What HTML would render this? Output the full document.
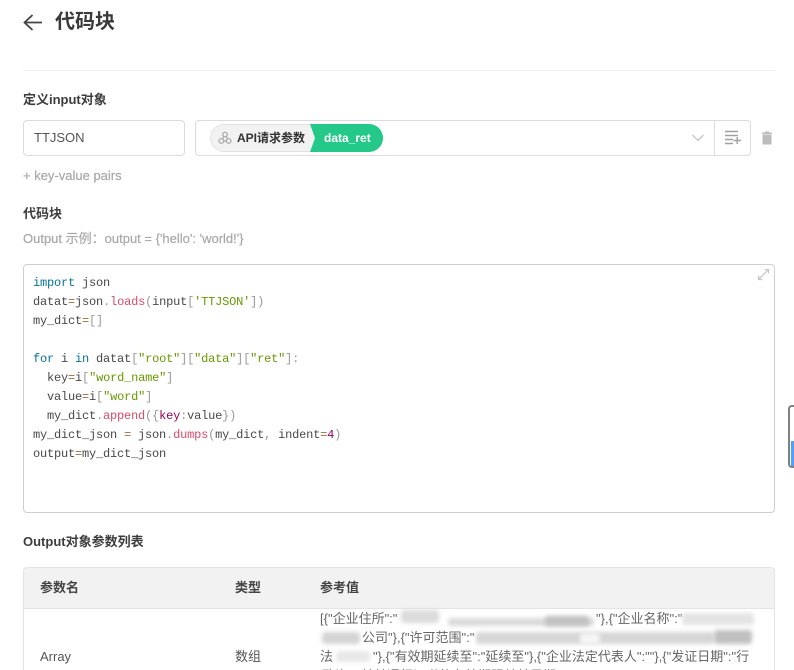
<!DOCTYPE html>
<html lang="zh">
<head>
<meta charset="utf-8">
<style>
html{margin:0;padding:0;background:#fff;width:794px;height:670px;overflow:hidden}
body{margin:0;padding:0;background:#fff;width:794px;height:670px;position:relative;overflow:hidden;font-family:"Liberation Sans","Noto Sans CJK SC",sans-serif;color:#333}
#w{position:absolute;left:0;top:0;width:794px;height:670px;overflow:hidden}
.a{position:absolute;white-space:nowrap}
.lb{font-size:13px;font-weight:700;line-height:18px;color:#3c3c3c}
.gr{color:#a8a8a8}
.box{position:absolute;box-sizing:border-box;border:1px solid #dcdcdc;border-radius:4px;background:#fff}
pre{position:absolute;left:33px;top:274px;margin:0;font:12px/19px "Liberation Mono","Noto Sans CJK SC",monospace;letter-spacing:-.2px;color:#484848}
.k{color:#07739d}.s{color:#669900}.f{color:#dd4a68}.o{color:#9a6e3a}.p{color:#999}.v{color:#905}
.blob{position:absolute;background:#d6d6d6;filter:blur(2px);border-radius:3px}
.t{font-size:13px;line-height:19px;color:#666}
</style>
</head>
<body>
<div id="w">
<svg class="a" style="left:22px;top:12px" width="21" height="21" viewBox="0 0 21 21" fill="none" stroke="#444" stroke-width="1.800"><path d="M20 10.500H2.500M10.500 3l-8 7.500 8 7.500"/></svg>
<div class="a" style="left:55px;top:8px;font-size:20px;font-weight:700;line-height:28px;color:#3a3a3a">代码块</div>
<div class="a" style="left:23px;top:70px;width:752px;height:1px;background:#f0f0f0"></div>

<div class="a lb" style="left:23px;top:91px">定义input对象</div>
<div class="box" style="left:23px;top:120px;width:162px;height:36px"></div>
<div class="a" style="left:34px;top:129px;font-size:13px;line-height:18px;color:#555">TTJSON</div>

<div class="box" style="left:195px;top:120px;width:556px;height:36px"></div>
<div class="a" style="left:714px;top:121px;width:1px;height:34px;background:#dcdcdc"></div>
<div class="a" style="left:210px;top:124px;width:173px;height:28px;box-sizing:border-box;background:#f2f2f2;border:1px solid #e2e2e2;border-radius:14px"></div>
<svg class="a" style="left:310px;top:124px" width="74" height="28" viewBox="0 0 74 28"><path d="M0 0H59a14 14 0 0 1 0 28H0L5 14Z" fill="#24c98a"/></svg>
<svg class="a" style="left:218px;top:131px" width="14" height="14" viewBox="0 0 14 14" fill="none" stroke="#a5a5a5" stroke-width="1.200"><circle cx="7" cy="3.500" r="2.300"/><circle cx="3.300" cy="10" r="2.300"/><circle cx="10.700" cy="10" r="2.300"/><path d="M5.800 5.500L4.500 8M8.200 5.500L9.500 8M5.600 10H8.400"/></svg>
<div class="a" style="left:237px;top:130px;font-size:12px;font-weight:700;line-height:17px;color:#333">API请求参数</div>
<div class="a" style="left:324px;top:129px;font-size:12px;font-weight:700;line-height:18px;color:#fff">data_ret</div>
<svg class="a" style="left:691px;top:133px" width="14" height="10" viewBox="0 0 14 10" fill="none" stroke="#c4c4c4" stroke-width="1.300"><path d="M1.500 2l5.500 5.500L12.500 2"/></svg>
<svg class="a" style="left:725px;top:130px" width="16" height="15" viewBox="0 0 16 15" fill="none" stroke="#a0a0a0" stroke-width="1.400"><path d="M0 1.500H13M0 5.500H13M0 9.500H8M0 13.500H8M8.500 10.500H16M12.200 7V14"/></svg>
<svg class="a" style="left:761px;top:131px" width="12" height="14" viewBox="0 0 12 14" fill="#bcbcbc"><path d="M4 0.500H8V1.500H11V3H1V1.500H4ZM1.500 3.500H10.500V13.500H1.500Z"/></svg>

<div class="a gr" style="left:23px;top:167px;font-size:13px;font-weight:400;line-height:17px;-webkit-text-stroke:.2px #a8a8a8">+ key-value pairs</div>

<div class="a lb" style="left:23px;top:205px">代码块</div>
<div class="a gr" style="left:23px;top:230px;font-size:13px;line-height:17px;-webkit-text-stroke:.2px #a8a8a8">Output 示例：output = {'hello': 'world!'}</div>

<div class="box" style="left:23px;top:264px;width:752px;height:249px;border-color:#cfcfcf"></div>
<svg class="a" style="left:757px;top:268px" width="13" height="13" viewBox="0 0 13 13" fill="none" stroke="#c8c8c8" stroke-width="1.300"><path d="M2 11L11 2M7.500 1.500H11.500V5.500M1.500 7.500V11.500H5.500"/></svg>
<pre><span class="k">import</span> json
datat<span class="o">=</span>json<span class="p">.</span><span class="f">loads</span><span class="p">(</span>input<span class="p">[</span><span class="s">'TTJSON'</span><span class="p">])</span>
my_dict<span class="o">=</span><span class="p">[]</span>

<span class="k">for</span> i <span class="k">in</span> datat<span class="p">[</span><span class="s">"root"</span><span class="p">][</span><span class="s">"data"</span><span class="p">][</span><span class="s">"ret"</span><span class="p">]:</span>
  key<span class="o">=</span>i<span class="p">[</span><span class="s">"word_name"</span><span class="p">]</span>
  value<span class="o">=</span>i<span class="p">[</span><span class="s">"word"</span><span class="p">]</span>
  my_dict<span class="p">.</span><span class="f">append</span><span class="p">({</span><span class="v">key</span><span class="p">:</span>value<span class="p">})</span>
my_dict_json <span class="o">=</span> json<span class="p">.</span><span class="f">dumps</span><span class="p">(</span>my_dict<span class="p">,</span> indent<span class="o">=</span><span class="v">4</span><span class="p">)</span>
output<span class="o">=</span>my_dict_json</pre>

<div class="a lb" style="left:23px;top:533px">Output对象参数列表</div>

<div class="a" style="left:23px;top:567px;width:752px;height:103px;box-sizing:border-box;border:1px solid #e4e4e4;border-bottom:0;border-radius:4px 4px 0 0;background:#fff"></div>
<div class="a" style="left:24px;top:568px;width:750px;height:40px;background:#f2f2f2;border-radius:3px 3px 0 0;border-bottom:1px solid #e4e4e4"></div>
<div class="a" style="left:40px;top:578px;font-size:13px;font-weight:700;line-height:19px;color:#444">参数名</div>
<div class="a" style="left:235px;top:578px;font-size:13px;font-weight:700;line-height:19px;color:#444">类型</div>
<div class="a" style="left:320px;top:578px;font-size:13px;font-weight:700;line-height:19px;color:#444">参考值</div>
<div class="a" style="left:40px;top:647px;font-size:13px;line-height:19px;color:#555">Array</div>
<div class="a" style="left:235px;top:647px;font-size:13px;line-height:19px;color:#555">数组</div>

<div class="a t" style="left:320px;top:609px">[{"企业住所":"</div>
<div class="blob" style="left:401px;top:610px;width:38px;height:13px;background:#dcdcdc"></div>
<div class="blob" style="left:448px;top:618px;width:146px;height:8px;background:#dadada"></div>
<div class="blob" style="left:545px;top:616px;width:44px;height:10px;background:#c2c2c2"></div>
<div class="a t" style="left:596px;top:609px">"},{"企业名称":"</div>
<div class="blob" style="left:682px;top:613px;width:72px;height:12px;background:#e4e4e4"></div>

<div class="blob" style="left:322px;top:632px;width:38px;height:12px;background:#d4d4d4"></div>
<div class="a t" style="left:362px;top:628px">公司"},{"许可范围":"</div>
<div class="blob" style="left:476px;top:632px;width:238px;height:12px;background:#d6d6d6"></div>
<div class="blob" style="left:580px;top:633px;width:20px;height:11px;background:#f6f6f6"></div>
<div class="blob" style="left:714px;top:630px;width:38px;height:14px;background:#c0c0c0"></div>

<div class="a t" style="left:320px;top:647px">法</div>
<div class="blob" style="left:336px;top:651px;width:34px;height:11px;background:#e8e8e8"></div>
<div class="a t" style="left:373px;top:647px">"},{"有效期延续至":"延续至"},{"企业法定代表人":""},{"发证日期":"行</div>
<div class="a t" style="left:322px;top:666px;height:4px;overflow:hidden;color:#777">政许可某某通行证书的有效期限某某日期</div>

<div class="a" style="left:788px;top:405px;width:6px;height:63px;box-sizing:border-box;border:2px solid #808080;border-right:0;border-radius:4px 0 0 4px;background:#fff"></div>
<div class="a" style="left:791px;top:441px;width:3px;height:25px;background:#4ea1ff"></div>
</div>
</body>
</html>
